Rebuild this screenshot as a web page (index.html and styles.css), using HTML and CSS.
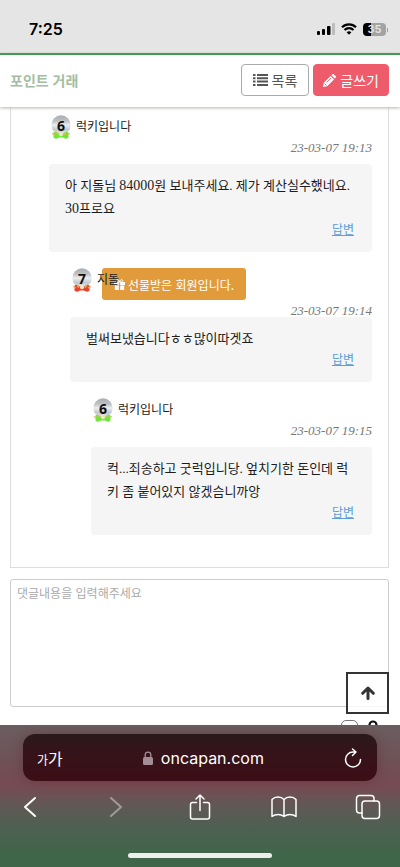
FILE: index.html
```html
<!DOCTYPE html>
<html lang="ko">
<head>
<meta charset="utf-8">
<meta name="viewport" content="width=device-width, initial-scale=1">
<title>포인트 거래</title>
<link rel="stylesheet" href="styles.css">
</head>
<body>
<svg class="defs" aria-hidden="true">
  <defs>
    <linearGradient id="silver" x1="0" y1="0" x2="0" y2="1">
      <stop offset="0" stop-color="#a9adb0"/>
      <stop offset="0.3" stop-color="#bfc2c5"/>
      <stop offset="0.5" stop-color="#eceeef"/>
      <stop offset="0.75" stop-color="#c3c6c9"/>
      <stop offset="1" stop-color="#f2f2f2"/>
    </linearGradient>
    <symbol id="medal" viewBox="0 0 20 24">
      <circle cx="10" cy="10" r="9.7" fill="url(#silver)"/>
      <path d="M2.500 17.500c2-1.500 3.500-.5 5 1h5c1.500-1.500 3-2.500 5-1v5c-2 1.800-4 1.300-5.500 0h-4c-1.500 1.300-3.500 1.800-5.500 0z" fill="currentColor"/>
      <path d="M1 18.500l3 1.500M19 18.500l-3 1.500M5 17.500l2 2M15 17.500l-2 2" stroke="#e9b45c" stroke-width="1.200"/>
      <circle cx="10" cy="19.300" r="2" fill="#f3e6c4"/>
    </symbol>
  </defs>
</svg>

<div class="status">
  <span class="clock">7:25</span>
  <span class="signals">
    <svg width="18" height="12" viewBox="0 0 18 12"><rect x="0" y="8" width="3" height="4" rx="1"/><rect x="5" y="6" width="3" height="6" rx="1"/><rect x="10" y="3" width="3.500" height="9" rx="1"/><rect x="15" y="0" width="3" height="12" rx="1" fill="#bdbdbd"/></svg>
    <svg width="16" height="12" viewBox="0 0 16 12" fill="none" stroke="#000" stroke-width="2.200"><path d="M1 4.200a10 10 0 0 1 14 0M3.500 7a6.400 6.400 0 0 1 9 0"/><path d="M8 11.800L5.600 9.300a3.500 3.500 0 0 1 4.800 0z" fill="#000" stroke="none"/></svg>
    <span class="battery">35</span>
  </span>
</div>

<header class="topbar">
  <h1>포인트 거래</h1>
  <nav>
    <button class="btn" type="button">
      <svg width="15" height="12" viewBox="0 0 15 12" fill="currentColor"><path d="M0 0h2.500v2H0zM4 0h11v2H4zM0 3.300h2.500v2H0zM4 3.300h11v2H4zM0 6.600h2.500v2H0zM4 6.600h11v2H4zM0 10h2.500v2H0zM4 10h11v2H4z"/></svg>
      목록</button>
    <button class="btn btn-write" type="button">
      <svg width="13" height="13" viewBox="0 0 13 13" fill="currentColor"><path d="M0 13l.8-4.200L7.600 2l3.400 3.400-6.800 6.800zM8.400 1.200l.8-.8c.6-.5 1.200-.5 1.700 0l1.700 1.700c.5.600.5 1.200 0 1.700l-.8.800z"/><path d="M1.600 9.600l1.800 1.800M3.500 8.500L8 4" stroke="#ee5c6c" stroke-width=".9"/></svg>
      글쓰기</button>
  </nav>
</header>

<main class="page">
  <section class="comments">
    <article class="comment">
      <div class="meta">
        <span class="badge badge-green"><svg width="20" height="24"><use href="#medal"/></svg><b>6</b></span>
        <span class="name">럭키입니다</span>
        <time>23-03-07 19:13</time>
      </div>
      <div class="bubble">
        <p>아 지돌님 <span class="num">84000</span>원 보내주세요. 제가 계산실수했네요. <span class="num">30</span>프로요</p>
        <a href="#">답변</a>
      </div>
    </article>

    <article class="comment reply-1">
      <div class="meta meta-gift">
        <span class="badge badge-red"><svg width="20" height="24"><use href="#medal"/></svg><b>7</b></span>
        <span class="name">지돌</span>
        <button class="gift" type="button">
          <svg width="11" height="11" viewBox="0 0 11 11" fill="currentColor"><path d="M0 3h4.800v3H0zM6.200 3H11v3H6.200zM.8 6.500h4V11h-4zM6.200 6.500h4V11h-4z"/><path d="M5.500 3C3 3.200 2 2.600 2.200 1.500 2.600 0 4.800.3 5.500 3 6.200.3 8.400 0 8.800 1.500 9 2.600 8 3.200 5.500 3z" fill="none" stroke="currentColor"/></svg>
          선물받은 회원입니다.</button>
        <time>23-03-07 19:14</time>
      </div>
      <div class="bubble">
        <p>벌써보냈습니다ㅎㅎ많이따겟죠</p>
        <a href="#">답변</a>
      </div>
    </article>

    <article class="comment reply-2">
      <div class="meta">
        <span class="badge badge-green"><svg width="20" height="24"><use href="#medal"/></svg><b>6</b></span>
        <span class="name">럭키입니다</span>
        <time>23-03-07 19:15</time>
      </div>
      <div class="bubble">
        <p>컥...죄송하고 굿럭입니당. 엎치기한 돈인데 럭키 좀 붙어있지 않겠슴니까앙</p>
        <a href="#">답변</a>
      </div>
    </article>
  </section>

  <form class="write">
    <textarea aria-label="댓글내용" placeholder="댓글내용을 입력해주세요"></textarea>
    <label class="secret">
      <input type="checkbox" aria-label="비밀글">
      <svg width="12" height="16" viewBox="0 0 12 16"><path d="M2.500 8V5a3.500 3.500 0 0 1 7 0v3" fill="none" stroke="#111" stroke-width="2.200"/><rect y="7" width="12" height="9" rx="1" fill="#111"/></svg>
    </label>
  </form>
</main>

<footer class="browser">
  <button class="to-top" type="button" aria-label="맨 위로">
    <svg width="14" height="14" viewBox="0 0 14 14" fill="none" stroke="#333" stroke-width="3" stroke-linecap="round" stroke-linejoin="round"><path d="M7 12.500V2.500M1.700 7.300L7 2l5.300 5.300"/></svg>
  </button>
  <div class="address">
    <button class="text-size" type="button"><small>가</small>가</button>
    <span class="url">
      <svg width="10" height="14" viewBox="0 0 10 14"><path d="M2.200 7V4a2.800 2.800 0 0 1 5.600 0v3" fill="none" stroke="#a28f96" stroke-width="1.300"/><rect y="6" width="10" height="8" rx="1.500" fill="#a28f96"/></svg>
      oncapan.com</span>
    <button type="button" aria-label="새로고침">
      <svg width="18" height="20" viewBox="0 0 18 20" fill="none" stroke="#fff" stroke-width="1.500" stroke-linecap="round" stroke-linejoin="round"><path d="M10.500 4H9a7.500 7.500 0 1 0 7.500 7.500M8.500 1l3.500 3-3.500 3.500"/></svg>
    </button>
  </div>
  <nav class="tools">
    <button type="button" aria-label="뒤로"><svg width="26" height="26" viewBox="0 0 26 26"><path d="M17 4L7 13l10 9" stroke-width="2"/></svg></button>
    <button type="button" aria-label="앞으로" disabled><svg width="26" height="26" viewBox="0 0 26 26"><path d="M9 4l10 9-10 9" stroke-width="2"/></svg></button>
    <button type="button" aria-label="공유"><svg width="26" height="26" viewBox="0 0 26 26"><path d="M9.500 8.500H5.500a2 2 0 0 0-2 2V23a2 2 0 0 0 2 2h15a2 2 0 0 0 2-2V10.500a2 2 0 0 0-2-2H16.500M13 16.500V1M9 5l4-4 4 4"/></svg></button>
    <button type="button" aria-label="책갈피"><svg width="26" height="26" viewBox="0 0 26 26"><path d="M13 5.500C10 2.300 4 2.300 1 5.500v17c3.500-2.600 8.500-2.600 12 0 3.500-2.600 8.500-2.600 12 0v-17C22 2.300 16 2.300 13 5.500zv17"/></svg></button>
    <button type="button" aria-label="탭"><svg width="26" height="26" viewBox="0 0 26 26"><path d="M7 19H4.500a3 3 0 0 1-3-3V4.500a3 3 0 0 1 3-3H16a3 3 0 0 1 3 3V7"/><rect x="7" y="7" width="17.500" height="17.500" rx="3"/></svg></button>
  </nav>
  <div class="home"></div>
</footer>
</body>
</html>
```
FILE: styles.css
```css
* {
  box-sizing: border-box;
}

body {
  margin: 0;
  height: 100vh;
  display: flex;
  flex-direction: column;
  background: #fff;
  color: #1c1c1c;
  font-family: "Liberation Serif", "Noto Sans CJK KR", serif;
  font-size: 13px;
}

button {
  font: inherit;
  color: inherit;
  border: 0;
  background: none;
  padding: 0;
}

svg {
  display: block;
  flex: none;
}

h1,
p {
  margin: 0;
}

.defs {
  position: absolute;
  width: 0;
  height: 0;
}

.status {
  flex: none;
  display: flex;
  align-items: center;
  justify-content: space-between;
  height: 53px;
  padding: 5px 14px 0 29px;
  background: #e5e5e5;
  color: #000;
  font-family: Inter, sans-serif;
}

.clock {
  font-size: 16px;
  font-weight: 600;
}

.signals {
  display: flex;
  align-items: center;
  gap: 6px;
}

.battery {
  position: relative;
  width: 23px;
  border-radius: 4px;
  background: linear-gradient(90deg, #000 35%, #a3a3a3 35%);
  color: #e5e5e5;
  font-size: 11px;
  font-weight: 600;
  line-height: 13px;
  text-align: center;
}

.battery::after {
  content: "";
  position: absolute;
  left: 24px;
  top: 5px;
  width: 1px;
  height: 4px;
  background: #a3a3a3;
}

.topbar {
  position: relative;
  flex: none;
  display: flex;
  align-items: center;
  justify-content: space-between;
  height: 54px;
  padding: 0 11px 2px 10px;
  border-top: 2px solid #419b55;
  background: #fff;
  box-shadow: 0 1px 3px #b5b5a8;
  font-family: "Noto Sans CJK KR", sans-serif;
}

.topbar h1 {
  color: #a5bda1;
  font-size: 14px;
  font-weight: 700;
}

.topbar nav {
  display: flex;
  gap: 4px;
}

.btn {
  display: flex;
  align-items: center;
  gap: 4px;
  height: 32px;
  padding: 0 11px;
  border: 1px solid #aaa;
  border-radius: 4px;
  color: #555;
  font-size: 14px;
  line-height: 20px;
}

.btn-write {
  padding: 0 9px;
  border-color: #ee5c6c;
  background: #ee5c6c;
  color: #fff;
}

.page {
  flex: 1;
  min-height: 0;
  overflow: auto;
  scrollbar-width: none;
  padding: 0 11px 0 10px;
}

.comments {
  display: flex;
  flex-direction: column;
  gap: 16px;
  padding: 8px 16px 32px 38px;
  border: 1px solid #ddd;
  border-top: 0;
}

.reply-1 {
  margin-left: 21px;
}

.reply-2 {
  margin-left: 42px;
}

.meta {
  position: relative;
  display: flex;
  align-items: flex-start;
  gap: 5px;
  height: 49px;
  padding-left: 2px;
}

.badge {
  display: grid;
}

.badge > * {
  grid-area: 1 / 1;
}

.badge b {
  color: #111;
  font-family: "Open Sans", sans-serif;
  font-size: 14px;
  line-height: 21px;
  text-align: center;
}

.badge-green {
  color: #6be838;
}

.badge-red {
  color: #e8422e;
}

.name {
  z-index: 1;
  color: #222;
  font-family: "Noto Sans CJK KR", sans-serif;
  font-size: 12px;
  line-height: 22px;
}

time {
  align-self: flex-end;
  margin: 0 0 8px auto;
  color: #777;
  font-size: 13px;
  font-style: italic;
  line-height: 16px;
}

.meta-gift time {
  margin-bottom: -2px;
}

.gift {
  position: absolute;
  left: 32px;
  top: 0;
  display: flex;
  align-items: center;
  gap: 3px;
  height: 32px;
  padding: 0 12px;
  border-radius: 3px;
  background: #e29b3a;
  color: #fff;
  font-family: "Noto Sans CJK KR", sans-serif;
  font-size: 12px;
}

.bubble {
  position: relative;
  display: flex;
  flex-direction: column;
  padding: 10px 18px 14px 16px;
  border-radius: 4px;
  background: #f5f5f5;
  line-height: 23px;
}

.num {
  font-size: 14px;
}

.bubble a {
  align-self: flex-end;
  color: #5ba0d8;
  font-family: "Noto Sans CJK KR", sans-serif;
  font-size: 12px;
  line-height: 18px;
}

.write {
  margin-top: 11px;
}

.write textarea {
  display: block;
  width: 100%;
  height: 128px;
  padding: 4px 6px;
  border: 1px solid #ccc;
  border-radius: 3px;
  resize: none;
  font-family: "Noto Sans CJK KR", sans-serif;
  font-size: 12px;
  line-height: 18px;
}

.write textarea::placeholder {
  color: #aaa;
}

.secret {
  display: flex;
  justify-content: flex-end;
  gap: 9px;
  padding: 13px 10px 20px 0;
}

.secret input {
  appearance: none;
  width: 17px;
  height: 17px;
  margin: 0;
  border: 1px solid #777;
  border-radius: 5px;
}

.browser {
  position: relative;
  flex: none;
  padding: 9px 0;
  background: linear-gradient(#6a5e60, #714f55 30%, #774b53 42%, #5f5955 58%, #4b6150 75%, #3f6649 92%);
  color: #fff;
}

.to-top {
  position: absolute;
  right: 11px;
  bottom: calc(100% + 11px);
  display: grid;
  place-items: center;
  width: 43px;
  height: 42px;
  border: 2px solid #333;
  background: rgba(255, 255, 255, 0.8);
}

.address {
  display: flex;
  align-items: center;
  justify-content: space-between;
  height: 47px;
  margin: 0 23px;
  padding: 0 15px 0 14px;
  border-radius: 12px;
  background: linear-gradient(#2a191c, #35131a 40%, #3d0d15);
  box-shadow: 0 0 12px rgba(90, 30, 42, 0.4);
  font-family: Inter, "Noto Sans CJK KR", sans-serif;
}

.text-size {
  font-size: 16px;
}

.text-size small {
  font-size: 12px;
}

.url {
  display: flex;
  align-items: center;
  gap: 8px;
  font-size: 16px;
}

.tools {
  display: flex;
  justify-content: space-between;
  margin-top: 13px;
  padding: 0 19px 0 18px;
  fill: none;
  stroke: #fff;
  stroke-width: 1.5;
  stroke-linecap: round;
  stroke-linejoin: round;
}

.tools button:disabled {
  opacity: 0.4;
}

.home {
  width: 36%;
  height: 5px;
  margin: 33px auto 0;
  border-radius: 3px;
  background: #eee;
}
```
